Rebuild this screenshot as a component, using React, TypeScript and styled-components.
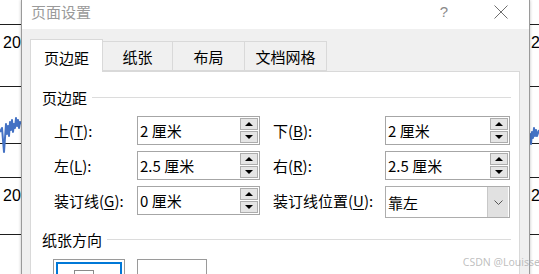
import React from 'react';
import styled, { createGlobalStyle } from 'styled-components';

const Global = createGlobalStyle`
  html, body { margin: 0; padding: 0; background: #fff; }
  #root { width: 539px; height: 274px; overflow: hidden; }
`;

const FONT = `"Noto Sans CJK SC", "Noto Sans", sans-serif`;

const Screen = styled.div`
  position: relative;
  width: 539px;
  height: 274px;
  overflow: hidden;
  background: #fff;
  font-family: ${FONT};
  color: #000;
`;

/* ---------- spreadsheet behind the dialog ---------- */
const Sheet = styled.div`
  display: flex;
  flex-direction: column;
`;

const SheetRow = styled.div<{ $h: number; $line?: boolean }>`
  box-sizing: border-box;
  height: ${(p) => p.$h}px;
  border-bottom: ${(p) => (p.$line === false ? 'none' : '1px solid #1e1e1e')};
  display: grid;
  grid-template-columns: 530px 1fr;
`;

const SheetCell = styled.div<{ $pl: number }>`
  padding: 9px 0 0 ${(p) => p.$pl}px;
  font-family: "Liberation Sans", sans-serif;
  font-size: 16px;
  line-height: 18px;
  white-space: nowrap;
  overflow: hidden;
`;

const Chart = styled.svg`
  position: absolute;
  left: 0;
  top: 110px;
`;

/* ---------- dialog ---------- */
const Dialog = styled.div`
  position: absolute;
  left: 21px;
  top: 0;
  width: 509px;
  height: 290px;
  box-sizing: border-box;
  border-left: 1px solid #9a9a9a;
  border-right: 1px solid #9a9a9a;
  box-shadow: 0 0 3px rgba(0, 0, 0, 0.25);
  display: flex;
  flex-direction: column;
  background: #f0f0f0;
`;

const TitleBar = styled.div`
  height: 29px;
  flex: none;
  background: #fff;
  display: flex;
  align-items: center;
  justify-content: space-between;
  padding: 0 21px 0 9px;
`;

const Title = styled.div`
  font-size: 15px;
  color: #9a9a9a;
  margin-top: -7px;
`;

const Controls = styled.div`
  display: flex;
  align-items: center;
  gap: 46px;
  margin-top: -6px;
`;

const Help = styled.span`
  font-family: "Liberation Sans", sans-serif;
  font-size: 15px;
  color: #8a8a8a;
`;

const Body = styled.div`
  flex: 1;
  padding: 10px 9px 0 8px;
  display: flex;
  flex-direction: column;
`;

const TabStrip = styled.div`
  display: flex;
  align-items: flex-end;
  height: 32px;
  position: relative;
  z-index: 1;
`;

const Tab = styled.div<{ $w: number; $active?: boolean }>`
  box-sizing: border-box;
  width: ${(p) => p.$w}px;
  height: ${(p) => (p.$active ? 33 : 30)}px;
  margin-bottom: ${(p) => (p.$active ? -1 : 0)}px;
  padding-top: ${(p) => (p.$active ? 2 : 0)}px;
  background: ${(p) => (p.$active ? '#fff' : '#f0f0f0')};
  border: 1px solid #d9d9d9;
  border-bottom: ${(p) => (p.$active ? 'none' : '1px solid #d9d9d9')};
  border-left: ${(p) => (p.$active ? '1px solid #d9d9d9' : 'none')};
  display: flex;
  align-items: center;
  justify-content: center;
  font-size: 15px;
`;

const Panel = styled.div`
  flex: 1;
  box-sizing: border-box;
  background: #fff;
  border: 1px solid #d9d9d9;
  padding: 15px 8px 0 11px;
  display: flex;
  flex-direction: column;
`;

const GroupHeader = styled.div<{ $mt: number }>`
  display: flex;
  align-items: center;
  gap: 5px;
  height: 20px;
  margin-top: ${(p) => p.$mt}px;
  font-size: 15px;
  color: #000;
  &::after {
    content: '';
    flex: 1;
    height: 1px;
    background: #dcdcdc;
  }
`;

const FormGrid = styled.div`
  display: grid;
  grid-template-columns: 83px 123px 125px 125px;
  grid-auto-rows: 29px;
  row-gap: 6px;
  margin: 9px 0 0 12px;
  align-items: start;
`;

const Label = styled.label<{ $right?: boolean }>`
  height: 29px;
  display: flex;
  align-items: center;
  padding-left: ${(p) => (p.$right ? 13 : 0)}px;
  font-size: 15px;
  white-space: nowrap;
  u { text-decoration: underline; text-underline-offset: 2px; }
`;

const Spin = styled.div`
  box-sizing: border-box;
  height: 29px;
  border: 1px solid #a6a6a6;
  background: #fff;
  display: flex;
  align-items: center;
  padding: 0 1px 0 2px;
`;

const SpinValue = styled.span`
  flex: 1;
  font-size: 15px;
  white-space: nowrap;
`;

const SpinButtons = styled.div`
  display: flex;
  flex-direction: column;
  gap: 1px;
`;

const SpinBtn = styled.div<{ $dir: 'up' | 'down' }>`
  box-sizing: border-box;
  width: 18px;
  height: 12px;
  border: 1px solid #adadad;
  background: #e5e5e5;
  display: flex;
  align-items: center;
  justify-content: center;
  &::before {
    content: '';
    width: 0;
    height: 0;
    border-left: 4px solid transparent;
    border-right: 4px solid transparent;
    ${(p) =>
      p.$dir === 'up'
        ? 'border-bottom: 4px solid #000;'
        : 'border-top: 4px solid #000;'}
  }
`;

const Combo = styled.div`
  box-sizing: border-box;
  height: 32px;
  border: 1px solid #adadad;
  background: #fff;
  display: flex;
  align-items: stretch;
`;

const ComboValue = styled.span`
  flex: 1;
  display: flex;
  align-items: center;
  padding-left: 2px;
  font-size: 15px;
`;

const DropBtn = styled.div`
  width: 20px;
  margin: 0 1px 0 0;
  background: #e1e1e1;
  border-left: 1px solid #c8c8c8;
  display: flex;
  align-items: center;
  justify-content: center;
`;

const OrientRow = styled.div`
  display: flex;
  gap: 12px;
  margin: 10px 0 0 11px;
`;

const OrientBtn = styled.div<{ $w: number }>`
  box-sizing: border-box;
  width: ${(p) => p.$w}px;
  height: 50px;
  border: 1px solid #9a9a9a;
  background: #fff;
  padding: 2px;
  display: flex;
`;

const OrientInner = styled.div<{ $selected?: boolean }>`
  flex: 1;
  border: 2px solid ${(p) => (p.$selected ? '#0078d7' : 'transparent')};
  display: flex;
  justify-content: center;
  padding-top: 6px;
`;

const PageIcon = styled.div`
  width: 18px;
  height: 24px;
  border: 1px solid #8a8a8a;
  background: #fff;
  margin-right: 10px;
`;

const Watermark = styled.div`
  position: absolute;
  right: -1px;
  bottom: 5px;
  font-family: "Noto Sans", sans-serif;
  font-size: 10.5px;
  color: rgba(170, 170, 170, 0.75);
  white-space: nowrap;
`;

const leftWave =
  '0,22 2,18 3,30 4,42 5,28 6,14 7,24 8,16 9,26 10,12 11,20 12,10 13,22 14,14 15,18 16,8 17,16 18,10 19,18 20,12 22,14';
const rightWave = '528,30 530,24 531,34 532,22 533,28 534,18 535,26 536,20 537,26 539,20';

export default function App() {
  return (
    <Screen>
      <Global />
      <Sheet>
        <SheetRow $h={25}>
          <SheetCell $pl={3} />
          <SheetCell $pl={1} />
        </SheetRow>
        <SheetRow $h={62}>
          <SheetCell $pl={3}>2006</SheetCell>
          <SheetCell $pl={1}>2006</SheetCell>
        </SheetRow>
        <SheetRow $h={57}>
          <SheetCell $pl={3} />
          <SheetCell $pl={1} />
        </SheetRow>
        <SheetRow $h={34}>
          <SheetCell $pl={3} />
          <SheetCell $pl={1} />
        </SheetRow>
        <SheetRow $h={57}>
          <SheetCell $pl={3}>2006</SheetCell>
          <SheetCell $pl={1}>2006</SheetCell>
        </SheetRow>
        <SheetRow $h={39} $line={false}>
          <SheetCell $pl={3} />
          <SheetCell $pl={1} />
        </SheetRow>
      </Sheet>
      <Chart width={539} height={50} viewBox="0 0 539 50">
        <polyline points={leftWave} fill="none" stroke="#4472c4" strokeWidth={2} strokeLinejoin="round" />
        <polyline points={rightWave} fill="none" stroke="#4472c4" strokeWidth={2} strokeLinejoin="round" />
      </Chart>

      <Dialog>
        <TitleBar>
          <Title>页面设置</Title>
          <Controls>
            <Help>?</Help>
            <svg width={14} height={14} viewBox="0 0 14 14">
              <path d="M0.5 0.5 L13.5 13.5 M13.5 0.5 L0.5 13.5" stroke="#6f6f6f" strokeWidth={1} fill="none" />
            </svg>
          </Controls>
        </TitleBar>
        <Body>
          <TabStrip>
            <Tab $w={73} $active>页边距</Tab>
            <Tab $w={70}>纸张</Tab>
            <Tab $w={72}>布局</Tab>
            <Tab $w={82}>文档网格</Tab>
          </TabStrip>
          <Panel>
            <GroupHeader $mt={0}>页边距</GroupHeader>
            <FormGrid>
              <Label>上(<u>T</u>):</Label>
              <Spin>
                <SpinValue>2 厘米</SpinValue>
                <SpinButtons>
                  <SpinBtn $dir="up" />
                  <SpinBtn $dir="down" />
                </SpinButtons>
              </Spin>
              <Label $right>下(<u>B</u>):</Label>
              <Spin>
                <SpinValue>2 厘米</SpinValue>
                <SpinButtons>
                  <SpinBtn $dir="up" />
                  <SpinBtn $dir="down" />
                </SpinButtons>
              </Spin>

              <Label>左(<u>L</u>):</Label>
              <Spin>
                <SpinValue>2.5 厘米</SpinValue>
                <SpinButtons>
                  <SpinBtn $dir="up" />
                  <SpinBtn $dir="down" />
                </SpinButtons>
              </Spin>
              <Label $right>右(<u>R</u>):</Label>
              <Spin>
                <SpinValue>2.5 厘米</SpinValue>
                <SpinButtons>
                  <SpinBtn $dir="up" />
                  <SpinBtn $dir="down" />
                </SpinButtons>
              </Spin>

              <Label>装订线(<u>G</u>):</Label>
              <Spin>
                <SpinValue>0 厘米</SpinValue>
                <SpinButtons>
                  <SpinBtn $dir="up" />
                  <SpinBtn $dir="down" />
                </SpinButtons>
              </Spin>
              <Label $right>装订线位置(<u>U</u>):</Label>
              <Combo>
                <ComboValue>靠左</ComboValue>
                <DropBtn>
                  <svg width={9} height={5} viewBox="0 0 9 5">
                    <path d="M0.5 0.5 L4.5 4.5 L8.5 0.5" stroke="#555" strokeWidth={1} fill="none" />
                  </svg>
                </DropBtn>
              </Combo>
            </FormGrid>
            <GroupHeader $mt={14}>纸张方向</GroupHeader>
            <OrientRow>
              <OrientBtn $w={72}>
                <OrientInner $selected>
                  <PageIcon />
                </OrientInner>
              </OrientBtn>
              <OrientBtn $w={70}>
                <OrientInner />
              </OrientBtn>
            </OrientRow>
          </Panel>
        </Body>
      </Dialog>
      <Watermark>CSDN @Louisse</Watermark>
    </Screen>
  );
}
